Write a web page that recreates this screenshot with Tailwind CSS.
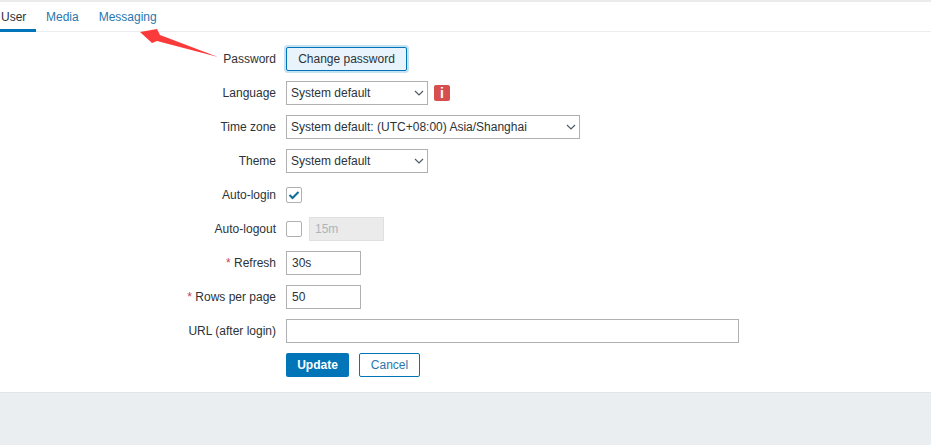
<!DOCTYPE html>
<html>
<head>
<meta charset="utf-8">
<script src="https://cdn.jsdelivr.net/npm/@tailwindcss/browser@4"></script>
</head>
<body class="m-0 h-[445px] w-[931px] overflow-hidden bg-[#ebeef0] font-['Liberation_Sans',Arial,sans-serif] text-[12px] text-[#2b3338]">
<div class="relative h-[393px] border-t-2 border-b border-t-[#ebebeb] border-b-[#e2e5e5] bg-white">
  <nav class="flex h-[30px] border-b border-[#ebeef0] text-[#2a76ad]">
    <a class="flex h-[30px] w-[36px] items-start border-b-[3px] border-[#0275b8] pl-[1px] pt-[6px] text-[#2b3338]">User</a>
    <a class="ml-[10px] pt-[6px]">Media</a>
    <a class="ml-[20px] pt-[6px]">Messaging</a>
  </nav>
  <svg class="absolute left-[138px] top-[24px]" width="84" height="34" viewBox="0 0 84 34"><path d="M2 6 L19 3 L22 9 L80 31 L19 15 L14 17 Z" fill="#fb3b3b"/></svg>
  <form class="flex flex-col gap-[10px] pt-[15px]">
    <div class="flex items-center gap-[10px]"><label class="w-[276px] text-right">Password</label><button type="button" class="h-[24px] w-[121px] rounded-[2px] border border-[#0275b8] bg-[#e8f3fb] text-[#2b3338] shadow-[0_0_0_2px_#c5e2f5]">Change password</button></div>
    <div class="flex items-center gap-[10px]"><label class="w-[276px] text-right">Language</label><div class="flex h-[24px] w-[142px] items-center justify-between border border-[#b0b0b0] pl-[4px] pr-[2px]">System default<svg width="12" height="12" viewBox="0 0 12 12" fill="none" stroke="#4f5b62" stroke-width="1.2"><path d="M2 4 L6 8 L10 4"/></svg></div><span class="ml-[-4px] flex h-[16px] w-[16px] items-center justify-center rounded-[2px] bg-[#d64e4e] text-[14px] font-bold text-white">i</span></div>
    <div class="flex items-center gap-[10px]"><label class="w-[276px] text-right">Time zone</label><div class="flex h-[24px] w-[294px] items-center justify-between border border-[#b0b0b0] pl-[4px] pr-[2px]">System default: (UTC+08:00) Asia/Shanghai<svg width="12" height="12" viewBox="0 0 12 12" fill="none" stroke="#4f5b62" stroke-width="1.2"><path d="M2 4 L6 8 L10 4"/></svg></div></div>
    <div class="flex items-center gap-[10px]"><label class="w-[276px] text-right">Theme</label><div class="flex h-[24px] w-[142px] items-center justify-between border border-[#b0b0b0] pl-[4px] pr-[2px]">System default<svg width="12" height="12" viewBox="0 0 12 12" fill="none" stroke="#4f5b62" stroke-width="1.2"><path d="M2 4 L6 8 L10 4"/></svg></div></div>
    <div class="flex h-[24px] items-center gap-[10px]"><label class="w-[276px] text-right">Auto-login</label><span class="flex h-[16px] w-[16px] items-center justify-center rounded-[2px] border border-[#b0b0b0]"><svg width="12" height="10" viewBox="0 0 12 10" fill="none" stroke="#0d6f95" stroke-width="2"><path d="M1.5 5 L4.5 8 L10.5 2"/></svg></span></div>
    <div class="flex h-[24px] items-center"><label class="w-[276px] text-right">Auto-logout</label><span class="ml-[10px] h-[16px] w-[16px] rounded-[2px] border border-[#b0b0b0]"></span><div class="ml-[7px] flex h-[24px] w-[75px] items-center border border-[#e0e0e0] bg-[#ebebeb] pl-[5px] text-[#acb5b9]">15m</div></div>
    <div class="flex items-center gap-[10px]"><label class="w-[276px] text-right"><span class="text-[#c0464f]">*</span> Refresh</label><div class="flex h-[24px] w-[75px] items-center border border-[#b0b0b0] pl-[5px]">30s</div></div>
    <div class="flex items-center gap-[10px]"><label class="w-[276px] text-right"><span class="text-[#c0464f]">*</span> Rows per page</label><div class="flex h-[24px] w-[75px] items-center border border-[#b0b0b0] pl-[5px]">50</div></div>
    <div class="flex items-center gap-[10px]"><label class="w-[276px] text-right">URL (after login)</label><div class="h-[24px] w-[453px] border border-[#b0b0b0]"></div></div>
    <div class="flex gap-[10px] pl-[286px]"><button type="button" class="h-[24px] w-[63px] rounded-[2px] bg-[#0275b8] font-bold text-white">Update</button><button type="button" class="h-[24px] w-[61px] rounded-[2px] border border-[#0275b8] text-[#2a76ad]">Cancel</button></div>
  </form>
</div>
</body>
</html>
